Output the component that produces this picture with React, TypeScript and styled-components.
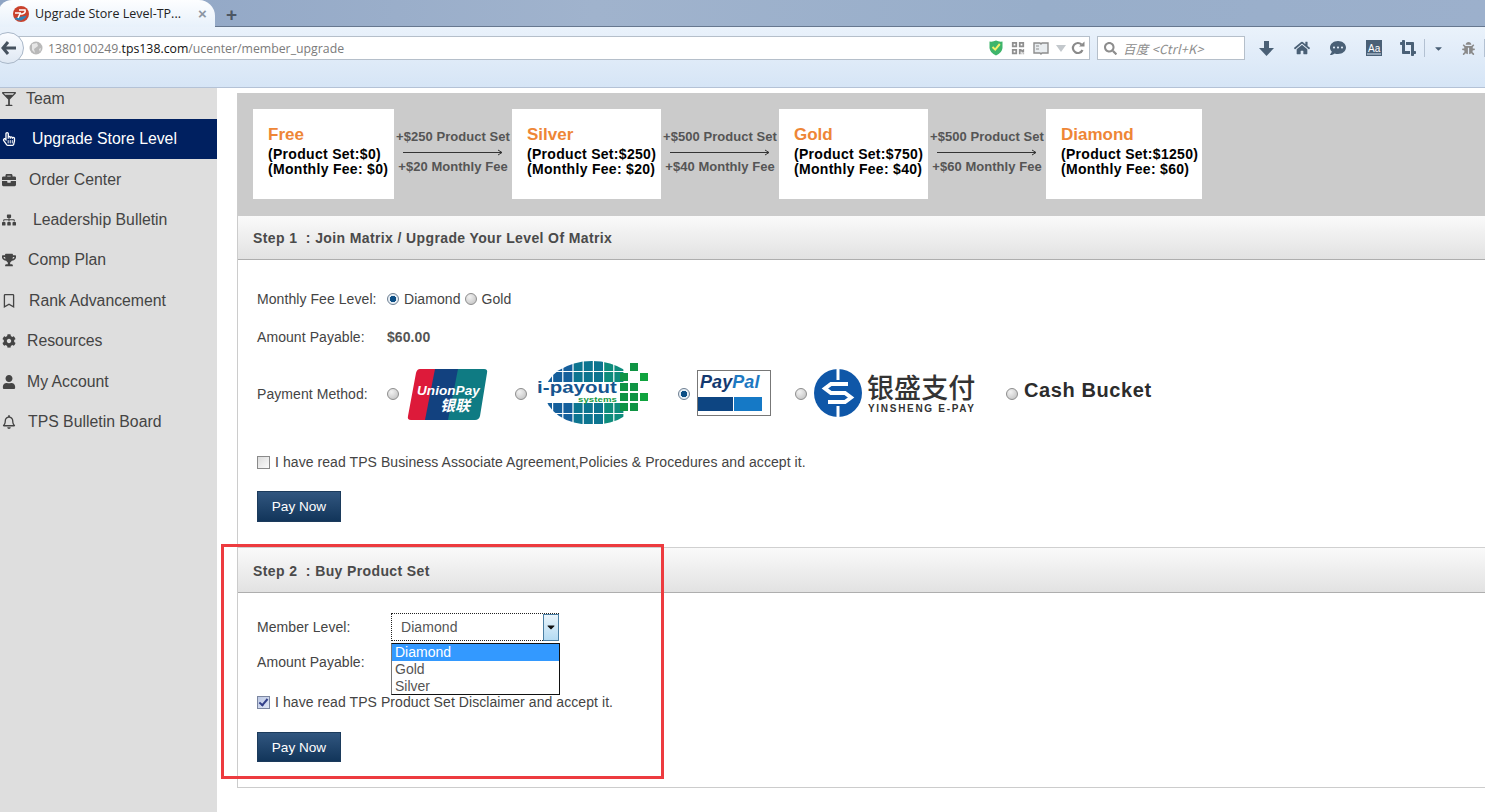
import React from 'react';
import styled, { createGlobalStyle } from 'styled-components';
import {
    FaBriefcase,
    FaBug,
    FaCaretDown,
    FaCog,
    FaCommentDots,
    FaCropAlt,
    FaGlassMartiniAlt,
    FaHome,
    FaQrcode,
    FaRegBell,
    FaRegBookmark,
    FaRegHandPointer,
    FaSearch,
    FaSitemap,
    FaTrophy,
    FaUser,
} from 'react-icons/fa';

const GlobalStyle = createGlobalStyle`
    html, body {
        margin: 0;
        padding: 0;
        height: 100%;
        overflow: hidden;
        background: #fff;
        font-family: "Liberation Sans", Arial, sans-serif;
    }
`;

const Screen = styled.div`
    position: relative;
    width: 1485px;
    height: 812px;
    overflow: hidden;
`;

/* ---- browser chrome ---- */

const TabStrip = styled.div`
    height: 27px;
    box-sizing: border-box;
    display: flex;
    align-items: flex-end;
    background: linear-gradient(90deg, #8ea4c4 0%, #a0b3cd 40%, #98aeca 70%, #9cb0cc 100%);
    border-bottom: 1px solid #66778f;
`;

const Tab = styled.div`
    width: 217px;
    height: 27px;
    flex: none;
    margin-bottom: -1px;
    margin-left: -2px;
    padding-left: 15px;
    box-sizing: border-box;
    display: flex;
    align-items: center;
    gap: 6px;
    background: linear-gradient(#fdfeff, #e8f1fb);
    border-radius: 14px 16px 0 0;
    font: 12.5px "Open Sans", sans-serif;
    color: #222;
`;

const TabTitle = styled.span`
    width: 157px;
    white-space: nowrap;
`;

const TabClose = styled.span`
    font: bold 15px "Liberation Sans", sans-serif;
    color: #8c96a2;
`;

const NewTab = styled.span`
    margin: 0 0 0 11px;
    font: bold 19px "Liberation Sans", sans-serif;
    color: #4c5663;
`;

const Toolbar = styled.div`
    height: 61px;
    padding-top: 9px;
    box-sizing: border-box;
    display: flex;
    align-items: flex-start;
    background: linear-gradient(#eaf2fb, #d6e5f6);
    border-bottom: 1px solid #b4c2d6;
`;

const AddressBar = styled.div`
    width: 1090px;
    height: 24px;
    flex: none;
    padding: 0 4px 0 29px;
    box-sizing: border-box;
    display: flex;
    align-items: center;
    gap: 5px;
    background: #fff;
    border: 1px solid #b5bfca;
    border-left: 0;
`;

const Url = styled.span`
    flex: 1;
    font: 12.3px "Open Sans", sans-serif;
    color: #7b7b7b;
    white-space: nowrap;
`;

const UrlHost = styled.span`
    color: #111;
`;

const BarIcons = styled.div`
    display: flex;
    align-items: center;
    gap: 8px;
    color: #8f8f8f;
    font-size: 14px;
`;

const DimSlot = styled.span`
    display: flex;
    margin: 0 -4px 0 -2px;
`;

const SearchBox = styled.div`
    width: 148px;
    height: 24px;
    flex: none;
    margin-left: 7px;
    padding-left: 6px;
    box-sizing: border-box;
    display: flex;
    align-items: center;
    gap: 6px;
    background: #fff;
    border: 1px solid #b5bfca;
    color: #8d8d8d;
    font: italic 12.5px "Noto Sans CJK SC", "Open Sans", sans-serif;
    letter-spacing: 0.3px;
`;

const ToolIcons = styled.div`
    display: flex;
    align-items: center;
    height: 24px;
    margin-left: 3px;
    color: #4a6076;
`;

const ToolSlot = styled.span<{ $w?: number }>`
    width: ${p => p.$w ?? 36}px;
    flex: none;
    display: flex;
    justify-content: center;
    align-items: center;
    font-size: 16px;
`;

const ToolSep = styled.span`
    width: 1px;
    height: 18px;
    flex: none;
    background: #b3c1d2;
`;

const BackButton = styled.div`
    position: absolute;
    left: -8px;
    top: 32px;
    width: 32px;
    height: 32px;
    box-sizing: border-box;
    display: flex;
    align-items: center;
    justify-content: flex-end;
    padding-right: 6px;
    border-radius: 50%;
    background: linear-gradient(#fafcff, #dfe8f3);
    border: 1px solid #a9b7c8;
`;

/* ---- page ---- */

const Page = styled.div`
    display: flex;
    height: 724px;
`;

const Sidebar = styled.nav`
    width: 217px;
    flex: none;
    overflow: hidden;
    background: #dedede;
`;

const MenuList = styled.div`
    margin-top: -9.4px;
`;

const MenuItem = styled.div<{ $active?: boolean; $gap: number }>`
    height: 40.4px;
    padding-left: 2px;
    display: flex;
    align-items: center;
    gap: ${p => p.$gap}px;
    font-size: 15.8px;
    color: ${p => (p.$active ? '#fff' : '#444')};
    background: ${p => (p.$active ? '#002060' : 'transparent')};
`;

const MenuIcon = styled.span`
    width: 14px;
    display: flex;
    justify-content: center;
    font-size: 14px;
`;

const Main = styled.main`
    flex: 1;
    min-width: 0;
    padding: 5px 0 0 20px;
`;

const Panel = styled.div`
    border-left: 1px solid #ccc;
    border-bottom: 1px solid #ccc;
    height: 694px;
`;

const LevelBanner = styled.div`
    height: 123px;
    padding: 16px 0 0 15px;
    box-sizing: border-box;
    display: flex;
    align-items: flex-start;
    background: #cbcbcb;
`;

const LevelCard = styled.div<{ $w: number }>`
    width: ${p => p.$w}px;
    height: 90px;
    padding: 17px 0 0 15px;
    box-sizing: border-box;
    background: #fff;
    color: #000;
    font-weight: bold;
    font-size: 14px;
    line-height: 15px;
    letter-spacing: 0.3px;
    white-space: nowrap;
`;

const LevelName = styled.div`
    margin-bottom: 3px;
    font-size: 17px;
    line-height: 18px;
    letter-spacing: 0;
    color: #ee8636;
`;

const Connector = styled.div`
    width: 118px;
    padding-top: 20px;
    display: flex;
    flex-direction: column;
    align-items: center;
    font-weight: bold;
    font-size: 13px;
    line-height: 16px;
    letter-spacing: 0.05px;
    color: #555;
    white-space: nowrap;
`;

const ArrowLine = styled.svg`
    display: block;
    margin: 4px 0 3px 0;
`;

const StepHeader = styled.div<{ $h: number; $pt?: number }>`
    height: ${p => p.$h}px;
    padding: ${p => p.$pt ?? 0}px 0 0 15px;
    box-sizing: border-box;
    display: flex;
    align-items: center;
    background: linear-gradient(#fafafa, #e2e2e2);
    border-bottom: 1px solid #aeaeae;
    font-weight: bold;
    font-size: 14px;
    letter-spacing: 0.38px;
    color: #4a4a4a;
    white-space: pre;
`;

const StepBody = styled.div<{ $h: number; $top: number }>`
    height: ${p => p.$h}px;
    padding: ${p => p.$top}px 0 0 19px;
    box-sizing: border-box;
    border-bottom: ${p => (p.$h > 250 ? '1px solid #d0d0d0' : '0')};
`;

const Row = styled.div<{ $h?: number; $mt?: number }>`
    height: ${p => p.$h ?? 20}px;
    margin-top: ${p => p.$mt ?? 0}px;
    display: flex;
    align-items: center;
    font-size: 14px;
    letter-spacing: 0.07px;
    color: #444;
    white-space: nowrap;
`;

const RowLabel = styled.span<{ $w?: number }>`
    width: ${p => p.$w ?? 130}px;
    flex: none;
`;

const Strong = styled.span`
    font-weight: bold;
    font-size: 14px;
    color: #555;
`;

const Radio = styled.input.attrs({ type: 'radio' })<{ $mr?: number; $ml?: number }>`
    appearance: none;
    flex: none;
    width: 12px;
    height: 12px;
    margin: 0 ${p => p.$mr ?? 5}px 0 ${p => p.$ml ?? 0}px;
    border-radius: 50%;
    border: 1px solid #8d8d8d;
    box-sizing: border-box;
    background: radial-gradient(circle at 35% 30%, #f2f2f2, #bdbdbd);
    &:checked {
        background: radial-gradient(circle, #0d4f86 0 3px, #e6eef5 3.4px);
        border-color: #6e7f92;
    }
`;

const Checkbox = styled.input.attrs({ type: 'checkbox' })`
    appearance: none;
    flex: none;
    position: relative;
    width: 13px;
    height: 13px;
    margin: 0 5px 0 0;
    box-sizing: border-box;
    border: 1px solid #8a8a8a;
    background: linear-gradient(135deg, #dcdcdc, #fbfbfb);
    &:checked {
        background: linear-gradient(135deg, #bcc8e4, #dfe6f5);
        border-color: #7b86a0;
    }
    &:checked::after {
        content: '';
        position: absolute;
        left: 3px;
        top: 0;
        width: 3px;
        height: 7px;
        border: solid #33408a;
        border-width: 0 2px 2px 0;
        transform: rotate(40deg);
    }
`;

const PayButton = styled.button<{ $h: number; $mt: number }>`
    display: block;
    width: 84px;
    height: ${p => p.$h}px;
    margin-top: ${p => p.$mt}px;
    padding: 0;
    border: 1px solid #1c3b5c;
    background: linear-gradient(#31567f, #12355a);
    color: #fff;
    font: 13.6px "Liberation Sans", sans-serif;
`;

const LogoBox = styled.span<{ $w: number; $mr: number }>`
    width: ${p => p.$w}px;
    margin-right: ${p => p.$mr}px;
    flex: none;
    display: flex;
`;

const CashBucket = styled.span`
    margin-bottom: 7px;
    font-weight: bold;
    font-size: 20px;
    letter-spacing: 0.6px;
    color: #2c2c2c;
`;

const FakeSelect = styled.div`
    width: 168px;
    height: 28px;
    box-sizing: border-box;
    display: flex;
    align-items: center;
    justify-content: space-between;
    padding-left: 9px;
    border: 1px dotted #222;
    border-right: 0;
    color: #555;
`;

const SelectArrow = styled.span`
    width: 16px;
    height: 27px;
    display: flex;
    align-items: center;
    justify-content: center;
    box-sizing: border-box;
    background: linear-gradient(#e9f4fb, #b4dbf3);
    border: 1px solid #4a7ea3;
    color: #111;
    font-size: 12px;
`;

const DropList = styled.div`
    position: absolute;
    left: 391px;
    top: 643px;
    width: 169px;
    height: 52px;
    box-sizing: border-box;
    background: #fff;
    border: 1px solid #111;
    border-left-color: #777;
    font-size: 14px;
`;

const DropOption = styled.div<{ $selected?: boolean }>`
    height: 17px;
    line-height: 17px;
    padding-left: 3px;
    color: ${p => (p.$selected ? '#fff' : '#555')};
    background: ${p => (p.$selected ? '#3399ff' : 'transparent')};
`;

const RedFrame = styled.div`
    position: absolute;
    left: 221px;
    top: 544px;
    width: 443px;
    height: 235px;
    box-sizing: border-box;
    border: 3px solid #ed3b3f;
    pointer-events: none;
`;

/* ---- drawings ---- */

const Favicon = () => (
    <svg width="16" height="16" viewBox="0 0 16 16">
        <circle cx="8" cy="8" r="8" fill="#c9412c" />
        <path d="M2 12 L14 9.5 A8 8 0 0 1 2 13z" fill="#2f84b8" />
        <path d="M6 4 H12 Q13 7 9 8 H7 L5 12 M2 7 H8" stroke="#fff" strokeWidth="1.6" fill="none" />
    </svg>
);

const Globe = () => (
    <svg width="14" height="14" viewBox="0 0 14 14">
        <circle cx="7" cy="7" r="6.5" fill="#b9b9b9" />
        <path d="M3 3 L8 2 L9 5 L5 8 L6 12 L3 9z M10 8 L12 7 L11 11z" fill="#e6e6e6" />
    </svg>
);

const Shield = () => (
    <svg width="14" height="16" viewBox="0 0 14 16">
        <path d="M0.5 1.5 Q4 2 7 0.5 Q10 2 13.5 1.5 V8 Q13 13 7 15.5 Q1 13 0.5 8z" fill="#3fb56b" />
        <path d="M3.5 7 L6.2 9.6 L10.8 4" stroke="#f4f06a" strokeWidth="2" fill="none" />
    </svg>
);

const ReaderIcon = () => (
    <svg width="16" height="13" viewBox="0 0 16 13">
        <path d="M1 1 H7 L8 2 L9 1 H15 V11 H9 L8 12 L7 11 H1z" fill="#e9edf0" stroke="#8d8d8d" strokeWidth="1.4" />
        <path d="M3 4 H6 M3 7 H6" stroke="#8d8d8d" />
    </svg>
);

const DimArrow = () => (
    <svg width="12" height="9" viewBox="0 0 12 9">
        <path d="M1 1 H11 L6 8z" fill="#c3c8cc" />
    </svg>
);

const Reload = () => (
    <svg width="14" height="14" viewBox="0 0 14 14">
        <path d="M11.5 9 A5 5 0 1 1 10.5 3.5" stroke="#8a8a8a" strokeWidth="2.2" fill="none" />
        <path d="M8 5.5 H13.5 V0.5z" fill="#8a8a8a" />
    </svg>
);

const DownloadArrow = () => (
    <svg width="15" height="15" viewBox="0 0 15 15">
        <path d="M5 0 H10 V7 H15 L7.5 15 L0 7 H5z" fill="#4a6076" />
    </svg>
);

const BackArrow = () => (
    <svg width="16" height="14" viewBox="0 0 16 14">
        <path d="M7 1 L2 7 L7 13 M2 7 H15" stroke="#46525f" strokeWidth="3" fill="none" />
    </svg>
);

const FontBox = () => (
    <svg width="16" height="16" viewBox="0 0 16 16">
        <rect width="16" height="16" fill="#4a6076" />
        <rect x="1" y="13.5" width="14" height="1" fill="#d6e5f6" />
        <text x="2" y="11.5" fill="#fff" fontSize="10" fontFamily="Liberation Sans">Aa</text>
    </svg>
);

const UnionPayLogo = () => (
    <svg width="81" height="51" viewBox="0 0 81 51">
        <path d="M13 0 H30 L20 51 H4 Q0 51 1 47 L9 4 Q10 0 13 0z" fill="#dd1a3a" />
        <path d="M28 0 H53 L42 51 H18z" fill="#12417f" />
        <path d="M51 0 H77 Q81 0 80 4 L73 47 Q72 51 68 51 H41z" fill="#0f7b83" />
        <text x="10" y="26" fill="#fff" fontSize="13.5" fontWeight="bold" fontStyle="italic" fontFamily="Liberation Sans">UnionPay</text>
        <text x="33" y="42" fill="#fff" fontSize="15" fontWeight="bold" fontStyle="italic" fontFamily="Noto Sans CJK SC">银联</text>
    </svg>
);

const globeColumns = [0, 1, 2, 3, 4, 5, 6, 7];
const globeRows = [0, 11, 42, 53];
const greenCells: [number, number][] = [
    [95, 2], [85, 12], [105, 12], [85, 22], [95, 22],
    [85, 32], [95, 32], [105, 32], [85, 42], [95, 42],
];

const IPayoutLogo = () => (
    <svg width="117" height="66" viewBox="0 0 117 66">
        <defs>
            <clipPath id="globe-clip">
                <ellipse cx="57" cy="32" rx="47" ry="32" />
            </clipPath>
        </defs>
        <g clipPath="url(#globe-clip)">
            {globeColumns.map(col =>
                globeRows.map(row => (
                    <rect
                        key={`${col}-${row}`}
                        x={col * 10.2 + 8}
                        y={row}
                        width="9"
                        height="10"
                        fill={col < 3 ? '#155f9c' : col < 6 ? '#0d7590' : '#0e8c7c'}
                    />
                ))
            )}
        </g>
        {greenCells.map(([x, y]) => (
            <rect key={`${x}-${y}`} x={x} y={y} width="8" height="8" fill={x === 105 ? '#10a33e' : '#0f9444'} />
        ))}
        <text
            x="2"
            y="32"
            fill="#16558f"
            fontSize="16"
            fontWeight="bold"
            textLength="80"
            lengthAdjust="spacingAndGlyphs"
            fontFamily="Liberation Sans"
        >
            i-payout
        </text>
        <text x="43" y="41" fill="#169a43" fontSize="8" fontWeight="bold" textLength="39" lengthAdjust="spacingAndGlyphs" fontFamily="Liberation Sans">systems</text>
    </svg>
);

const PayPalLogo = () => (
    <svg width="74" height="49" viewBox="0 0 74 49">
        <rect x="0.5" y="0.5" width="73" height="45" fill="#fff" stroke="#777" />
        <text x="3" y="18" fontSize="18" fontWeight="bold" fontStyle="italic" fontFamily="Liberation Sans">
            <tspan fill="#14396f">Pay</tspan>
            <tspan fill="#1d79c2">Pal</tspan>
        </text>
        <rect x="1" y="27" width="35" height="14" fill="#0d4582" />
        <rect x="37" y="27" width="28" height="14" fill="#1579c6" />
    </svg>
);

const YinshengLogo = () => (
    <svg width="162" height="50" viewBox="0 0 162 50">
        <circle cx="25" cy="24" r="24" fill="#0f57a8" />
        <rect x="23.5" y="0" width="3" height="11" fill="#fff" />
        <rect x="23.5" y="37" width="3" height="11" fill="#fff" />
        <path d="M35 15 H18 L12 19.5 L18 24 H32 L38 28.5 L32 33 H15" stroke="#fff" strokeWidth="4" fill="none" />
        <text x="54" y="29" fill="#333" fontSize="27" fontWeight="500" fontFamily="Noto Sans CJK SC">银盛支付</text>
        <text x="55" y="43" fill="#333" fontSize="10" fontWeight="bold" letterSpacing="1.7" fontFamily="Liberation Sans">YINSHENG E-PAY</text>
    </svg>
);

/* ---- data ---- */

const menu = [
    { icon: <FaGlassMartiniAlt />, label: 'Team', gap: 10 },
    { icon: <FaRegHandPointer />, label: 'Upgrade Store Level', gap: 16, active: true },
    { icon: <FaBriefcase />, label: 'Order Center', gap: 13 },
    { icon: <FaSitemap />, label: 'Leadership Bulletin', gap: 17 },
    { icon: <FaTrophy />, label: 'Comp Plan', gap: 12 },
    { icon: <FaRegBookmark />, label: 'Rank Advancement', gap: 13 },
    { icon: <FaCog />, label: 'Resources', gap: 11 },
    { icon: <FaUser />, label: 'My Account', gap: 11 },
    { icon: <FaRegBell />, label: 'TPS Bulletin Board', gap: 12 },
];

const levels = [
    { name: 'Free', w: 141, set: '$0', fee: '$0', add: '+$250 Product Set', monthly: '+$20 Monthly Fee' },
    { name: 'Silver', w: 149, set: '$250', fee: '$20', add: '+$500 Product Set', monthly: '+$40 Monthly Fee' },
    { name: 'Gold', w: 149, set: '$750', fee: '$40', add: '+$500 Product Set', monthly: '+$60 Monthly Fee' },
    { name: 'Diamond', w: 156, set: '$1250', fee: '$60' },
];

const App: React.FC = () => {
    return (
        <Screen>
            <GlobalStyle />
            <TabStrip>
                <Tab>
                    <Favicon />
                    <TabTitle>Upgrade Store Level-TP...</TabTitle>
                    <TabClose>×</TabClose>
                </Tab>
                <NewTab>+</NewTab>
            </TabStrip>
            <Toolbar>
                <AddressBar>
                    <Globe />
                    <Url>
                        1380100249.<UrlHost>tps138.com</UrlHost>/ucenter/member_upgrade
                    </Url>
                    <BarIcons>
                        <Shield />
                        <FaQrcode />
                        <ReaderIcon />
                        <DimSlot><DimArrow /></DimSlot>
                        <Reload />
                    </BarIcons>
                </AddressBar>
                <SearchBox>
                    <FaSearch size={13} />
                    <span>百度 &lt;Ctrl+K&gt;</span>
                </SearchBox>
                <ToolIcons>
                    <ToolSlot><DownloadArrow /></ToolSlot>
                    <ToolSlot><FaHome /></ToolSlot>
                    <ToolSlot><FaCommentDots /></ToolSlot>
                    <ToolSlot><FontBox /></ToolSlot>
                    <ToolSlot $w={32}><FaCropAlt /></ToolSlot>
                    <ToolSep />
                    <ToolSlot $w={27}><FaCaretDown size={11} /></ToolSlot>
                    <ToolSlot $w={32}><FaBug size={13} color="#8a8a8a" /></ToolSlot>
                    <ToolSep />
                </ToolIcons>
            </Toolbar>
            <BackButton>
                <BackArrow />
            </BackButton>
            <Page>
                <Sidebar>
                    <MenuList>
                        {menu.map(item => (
                            <MenuItem key={item.label} $active={item.active} $gap={item.gap}>
                                <MenuIcon>{item.icon}</MenuIcon>
                                {item.label}
                            </MenuItem>
                        ))}
                    </MenuList>
                </Sidebar>
                <Main>
                    <Panel>
                        <LevelBanner>
                            {levels.map(level => (
                                <React.Fragment key={level.name}>
                                    <LevelCard $w={level.w}>
                                        <LevelName>{level.name}</LevelName>
                                        <div>(Product Set:{level.set})</div>
                                        <div>(Monthly Fee: {level.fee})</div>
                                    </LevelCard>
                                    {level.add && (
                                        <Connector>
                                            {level.add}
                                            <ArrowLine width="100" height="7" viewBox="0 0 100 7">
                                                <path d="M0 3.5 H99 M95 1 L99 3.5 L95 6" stroke="#333" fill="none" />
                                            </ArrowLine>
                                            {level.monthly}
                                        </Connector>
                                    )}
                                </React.Fragment>
                            ))}
                        </LevelBanner>
                        <StepHeader $h={44}>Step 1  : Join Matrix / Upgrade Your Level Of Matrix</StepHeader>
                        <StepBody $h={288} $top={29}>
                            <Row>
                                <RowLabel>Monthly Fee Level:</RowLabel>
                                <Radio name="fee" defaultChecked />
                                Diamond
                                <Radio name="fee" $ml={4} />
                                Gold
                            </Row>
                            <Row $mt={18}>
                                <RowLabel>Amount Payable:</RowLabel>
                                <Strong>$60.00</Strong>
                            </Row>
                            <Row $h={66} $mt={14}>
                                <RowLabel>Payment Method:</RowLabel>
                                <Radio name="pay" $mr={8} />
                                <LogoBox $w={81} $mr={27}><UnionPayLogo /></LogoBox>
                                <Radio name="pay" $mr={8} />
                                <LogoBox $w={117} $mr={26}><IPayoutLogo /></LogoBox>
                                <Radio name="pay" $mr={7} defaultChecked />
                                <LogoBox $w={74} $mr={24}><PayPalLogo /></LogoBox>
                                <Radio name="pay" $mr={6} />
                                <LogoBox $w={162} $mr={31}><YinshengLogo /></LogoBox>
                                <Radio name="pay" $mr={6} />
                                <CashBucket>Cash Bucket</CashBucket>
                            </Row>
                            <Row $mt={25}>
                                <Checkbox />I have read TPS Business Associate Agreement,Policies &amp; Procedures and accept it.
                            </Row>
                            <PayButton $h={31} $mt={19}>Pay Now</PayButton>
                        </StepBody>
                        <StepHeader $h={45} $pt={2}>Step 2  : Buy Product Set</StepHeader>
                        <StepBody $h={194} $top={20}>
                            <Row $h={28}>
                                <RowLabel $w={134}>Member Level:</RowLabel>
                                <FakeSelect>
                                    Diamond
                                    <SelectArrow><FaCaretDown /></SelectArrow>
                                </FakeSelect>
                            </Row>
                            <Row $mt={11}>
                                <RowLabel>Amount Payable:</RowLabel>
                            </Row>
                            <Row $mt={20}>
                                <Checkbox defaultChecked />I have read TPS Product Set Disclaimer and accept it.
                            </Row>
                            <PayButton $h={30} $mt={20}>Pay Now</PayButton>
                        </StepBody>
                    </Panel>
                </Main>
            </Page>
            <DropList>
                <DropOption $selected>Diamond</DropOption>
                <DropOption>Gold</DropOption>
                <DropOption>Silver</DropOption>
            </DropList>
            <RedFrame />
        </Screen>
    );
};

export default App;
